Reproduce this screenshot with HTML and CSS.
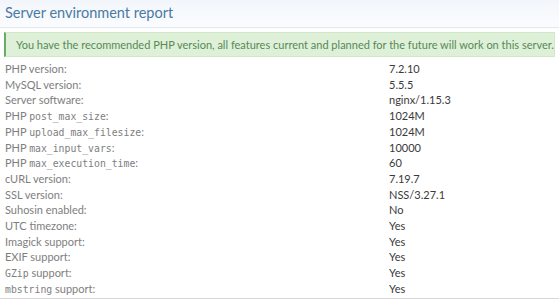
FILE: index.html
```html
<!DOCTYPE html>
<html>
<head>
<meta charset="utf-8">
<link rel="stylesheet" href="styles.css">
</head>
<body>
<div class="panel">
  <h2 class="title">Server environment report</h2>
  <div class="alert">You have the recommended PHP version, all features current and planned for the future will work on this server.</div>
  <dl class="report">
    <dt>PHP version:</dt><dd>7.2.10</dd>
    <dt>MySQL version:</dt><dd>5.5.5</dd>
    <dt>Server software:</dt><dd>nginx/1.15.3</dd>
    <dt>PHP <code>post_max_size</code>:</dt><dd>1024M</dd>
    <dt>PHP <code>upload_max_filesize</code>:</dt><dd>1024M</dd>
    <dt>PHP <code>max_input_vars</code>:</dt><dd>10000</dd>
    <dt>PHP <code>max_execution_time</code>:</dt><dd>60</dd>
    <dt>cURL version:</dt><dd>7.19.7</dd>
    <dt>SSL version:</dt><dd>NSS/3.27.1</dd>
    <dt>Suhosin enabled:</dt><dd>No</dd>
    <dt>UTC timezone:</dt><dd>Yes</dd>
    <dt>Imagick support:</dt><dd>Yes</dd>
    <dt>EXIF support:</dt><dd>Yes</dd>
    <dt><code>GZip</code> support:</dt><dd>Yes</dd>
    <dt><code>mbstring</code> support:</dt><dd>Yes</dd>
  </dl>
</div>
</body>
</html>
```

FILE: styles.css
```css
html, body {
  margin: 0;
  padding: 0;
  background: #fff;
}
body {
  font-family: Lato, "Noto Sans", sans-serif;
  width: 559px;
  height: 300px;
  overflow: hidden;
}
.panel {
  border-bottom: 1px solid #d8d8d8;
}
.title {
  margin: 0;
  height: 28px;
  box-sizing: border-box;
  padding: 3px 5px 0;
  font-size: 14.5px;
  font-weight: normal;
  line-height: 20px;
  color: #4a7aa3;
  background: linear-gradient(to bottom, #f2f6fb, #fbfcfe);
  border-bottom: 1px solid #e3e8ee;
}
.alert {
  margin: 4px 4px 0 4px;
  height: 25px;
  box-sizing: border-box;
  padding: 0 0 0 10px;
  line-height: 23px;
  font-size: 11px;
  color: #568a56;
  background: #dff0d9;
  border: 1px solid #d0e7c8;
  border-left: 2px solid #6aab6a;
  white-space: nowrap;
}
.report {
  margin: 4px 0 0;
  padding: 0 5px 1px;
  display: grid;
  grid-template-columns: 384px 1fr;
  font-size: 11px;
  line-height: 15.7px;
}
.report dt {
  color: #7e7e7e;
}
.report dd {
  margin: 0;
  color: #3a3a3a;
}
.report code {
  font-family: "DejaVu Sans Mono", monospace;
  font-size: 9.8px;
  line-height: 0;
}
```
